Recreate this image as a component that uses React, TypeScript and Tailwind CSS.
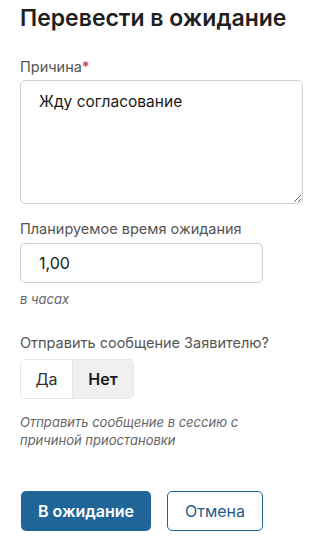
import React from 'react';

function App() {
	return (
		<div className="bg-white w-[320px] h-[550px] px-5 pt-[3px] text-[#222]" style={{ fontFamily: 'Inter, "Noto Sans", sans-serif' }}>
			<h1 className="text-[23px] leading-[30px] font-semibold text-[#1f1f1f]">Перевести в ожидание</h1>

			<div className="mt-[24px]">
				<p className="text-[14.5px] leading-[20px] text-[#555]">
					Причина<span className="text-[#d9263f]">*</span>
				</p>
				<textarea
					defaultValue="Жду согласование"
					className="mt-[3px] block w-[283px] h-[124px] border border-[#cfcfcf] rounded-[5px] px-[18px] py-[10px] text-[15.5px] leading-[22px] text-[#1a1a1a] resize-y outline-none"
				/>
			</div>

			<div className="mt-[15px]">
				<p className="text-[14.5px] leading-[20px] text-[#555]">Планируемое время ожидания</p>
				<input
					defaultValue="1,00"
					className="mt-[4px] block w-[243px] h-[40px] border border-[#cfcfcf] rounded-[5px] px-[18px] text-base text-[#1a1a1a] outline-none"
				/>
				<p className="mt-[7px] text-[13px] leading-[18px] italic text-[#666]">в часах</p>
			</div>

			<div className="mt-[25px]">
				<p className="text-[14.5px] leading-[20px] text-[#555]">Отправить сообщение Заявителю?</p>
				<div className="mt-[6px] flex w-[114px] h-[40px] border border-[#e5e5e5] rounded-[5px] overflow-hidden text-base">
					<button className="w-[52px] flex items-center justify-center text-[#333] bg-white border-r border-[#e5e5e5]">Да</button>
					<button className="flex-1 flex items-center justify-center font-semibold text-[#1a1a1a] bg-[#f0f0f0]">Нет</button>
				</div>
				<p className="mt-[14px] text-[13px] leading-[18px] italic text-[#666] w-[250px]">
					Отправить сообщение в сессию с причиной приостановки
				</p>
			</div>

			<div className="mt-[42px] flex gap-4 pl-px">
				<button className="w-[130px] h-[40px] rounded-[5px] bg-[#1f6597] text-white text-base font-semibold">В ожидание</button>
				<button className="w-[96px] h-[40px] rounded-[5px] border border-[#1f6597] text-[#1f5a8a] text-base bg-white">Отмена</button>
			</div>
		</div>
	);
}

export default App;
